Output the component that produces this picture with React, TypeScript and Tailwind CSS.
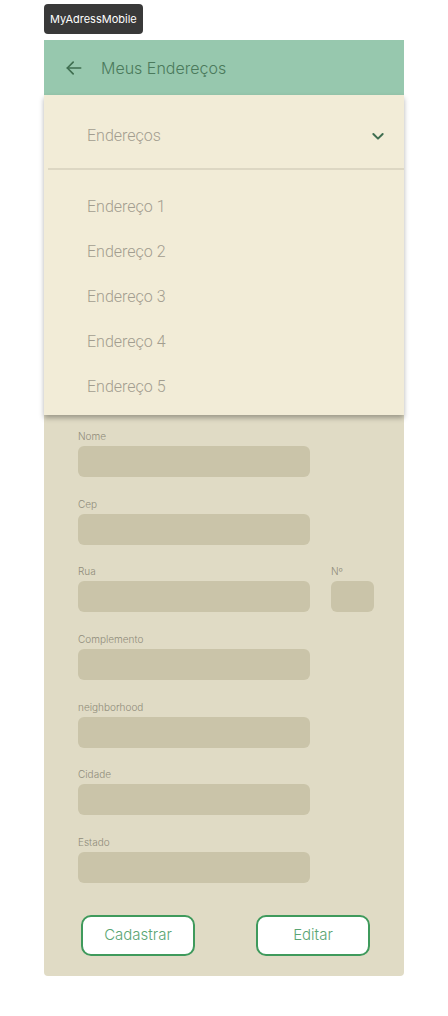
import React from "react"

const fields = ["Nome", "Cep", "Rua", "Complemento", "neighborhood", "Cidade", "Estado"]
const addresses = ["Endereço 1", "Endereço 2", "Endereço 3", "Endereço 4", "Endereço 5"]

function Field({ label }: { label: string }) {
  return (
    <div className="flex gap-[21px]">
      <div className="flex flex-col">
        <span className="text-[10px] leading-[12px] font-light text-[#8f8b7a] mb-[4px]">{label}</span>
        <div className="w-[232px] h-[31px] rounded-[6px] bg-[#cac4a9]" />
      </div>
      {label === "Rua" && (
        <div className="flex flex-col">
          <span className="text-[10px] leading-[12px] font-light text-[#8f8b7a] mb-[4px]">Nº</span>
          <div className="w-[43px] h-[31px] rounded-[6px] bg-[#cac4a9]" />
        </div>
      )}
    </div>
  )
}

export default function App() {
  const [open, setOpen] = React.useState(true)
  return (
    <div className="min-h-[1016px] bg-white pt-[4px] pl-[44px] font-['Inter',sans-serif]">
      <div className="w-fit rounded-[4px] bg-[#393939] px-[6px] py-[7px] text-[11px] leading-[16px] text-white">
        MyAdressMobile
      </div>
      <div className="relative mt-[6px] w-[360px] rounded-b-[4px] bg-[#e0dbc5]">
        <header className="flex h-[55px] items-center bg-[#97c8ae] pl-[20px]">
          <svg width="20" height="20" viewBox="0 0 24 24" fill="none" stroke="#3f6e50" strokeWidth="2" strokeLinecap="round" strokeLinejoin="round">
            <path d="M20 12H4" />
            <path d="M11 19l-7-7 7-7" />
          </svg>
          <span className="ml-[17px] text-[16px] font-light text-[#4b7a5c]">Meus Endereços</span>
        </header>

        <div className="h-[320px]" />

        <div className="flex flex-col gap-[20.7px] pl-[34px] pt-[15px]">
          {fields.map((f) => (
            <Field key={f} label={f} />
          ))}
        </div>

        <div className="flex justify-between pl-[37px] pr-[34px] pt-[32px] pb-[20px]">
          <button className="h-[41px] w-[114px] rounded-[10px] border-2 border-[#3f9a5c] bg-white text-[15px] font-light text-[#5aa574]">
            Cadastrar
          </button>
          <button className="h-[41px] w-[114px] rounded-[10px] border-2 border-[#3f9a5c] bg-white text-[15px] font-light text-[#5aa574]">
            Editar
          </button>
        </div>

        {open && (
          <div className="absolute left-0 top-[55px] w-[360px] bg-[#f2ecd7] shadow-[0_3px_5px_rgba(0,0,0,0.3)] font-['Roboto',sans-serif]">
            <button
              onClick={() => setOpen(false)}
              className="flex h-[73px] w-full items-center justify-between pl-[43px] pr-[18px] pt-[9px]"
            >
              <span className="text-[16px] font-light text-[#a29d8f]">Endereços</span>
              <svg width="16" height="16" viewBox="0 0 24 24" fill="none" stroke="#3f6e50" strokeWidth="3" strokeLinecap="round" strokeLinejoin="round">
                <path d="M5 9l7 7 7-7" />
              </svg>
            </button>
            <div className="ml-[4px] h-[2px] bg-[#ddd7c3]" />
            <div className="flex flex-col pt-[14px] pb-[6px]">
              {addresses.map((a) => (
                <div key={a} className="flex h-[45px] items-center pl-[43px] text-[16px] font-light text-[#a29d8f]">
                  {a}
                </div>
              ))}
            </div>
          </div>
        )}
      </div>
    </div>
  )
}
